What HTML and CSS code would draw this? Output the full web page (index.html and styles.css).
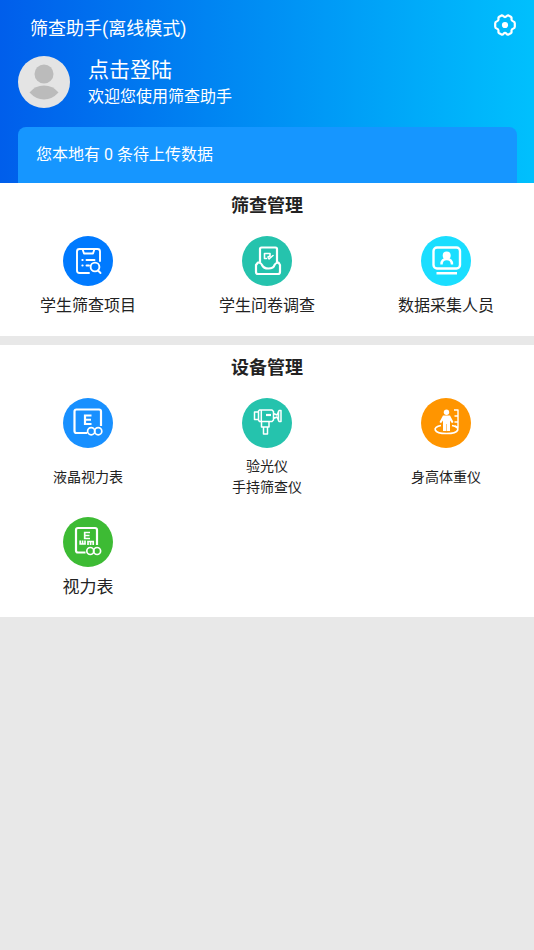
FILE: index.html
```html
<!DOCTYPE html>
<html lang="zh-CN">
<head>
<meta charset="utf-8">
<meta name="viewport" content="width=device-width, initial-scale=1">
<title>筛查助手</title>
<link rel="stylesheet" href="styles.css">
</head>
<body>
<header class="hero">
  <div class="topbar">
    <h1 class="app-title">筛查助手(离线模式)</h1>
    <button class="settings" type="button" aria-label="设置">
      <svg viewBox="0 0 24 24" width="24" height="24" fill="none" stroke="#fff" stroke-width="2.2" stroke-linejoin="round"><path d="M9 2.300Q9.900 2.300 10.500 3.300Q12 4.900 13.500 3.300Q14.100 2.300 15 2.300L17.800 3.700Q18.900 4.400 18.500 5.700Q18.200 7.900 20.400 8.500Q21.800 8.900 21.800 10.300V13.700Q21.800 15.100 20.400 15.500Q18.200 16.100 18.500 18.300Q18.900 19.600 17.800 20.300L15 21.700Q14.100 21.700 13.500 20.700Q12 19.100 10.500 20.700Q9.900 21.700 9 21.700L6.200 20.300Q5.100 19.600 5.500 18.300Q5.800 16.100 3.600 15.500Q2.200 15.100 2.200 13.700V10.300Q2.200 8.900 3.600 8.500Q5.800 7.900 5.500 5.700Q5.100 4.400 6.200 3.700Z"/><circle cx="12" cy="12" r="3.100" fill="#fff" stroke="none"/></svg>
    </button>
  </div>
  <a class="profile" href="#login">
    <svg class="avatar" viewBox="0 0 52 52" width="52" height="52"><circle cx="26" cy="26" r="26" fill="#e4e4e4"/><circle cx="26" cy="18" r="9.500" fill="#bbb"/><path d="M11.500 36.500Q17 29.500 26 29.500T40.500 36.500Q34 43.500 26 43.500T11.500 36.500Z" fill="#bbb"/></svg>
    <span class="profile-text">
      <span class="login">点击登陆</span>
      <span class="welcome">欢迎您使用筛查助手</span>
    </span>
  </a>
  <p class="notice">您本地有 0 条待上传数据</p>
</header>
<main>
  <section class="panel">
    <h2 class="panel-title">筛查管理</h2>
    <div class="grid">
      <a class="item" href="#projects">
        <svg class="icon" viewBox="0 0 50 50" fill="none" stroke="#fff" stroke-width="1.900" stroke-linecap="round" stroke-linejoin="round"><circle cx="25" cy="25" r="25" fill="#007aff" stroke="none"/><path d="M26 37H16.500Q14 37 14 34.500V15.500Q14 13 16.500 13H34.500Q37 13 37 15.500V25M19.500 13L21 17.500H30L31.500 13M23.500 24H31.500M23.500 29.500H26M19.300 24h.4M19.300 29.500h.4"/><circle cx="32" cy="31" r="4.400"/><path d="M35 34.500L37.500 37"/></svg>
        <span class="label">学生筛查项目</span>
      </a>
      <a class="item" href="#survey">
        <svg class="icon" viewBox="0 0 50 50" fill="none" stroke="#fff" stroke-width="2.200" stroke-linejoin="round" stroke-linecap="round"><circle cx="25" cy="25" r="25" fill="#25c3ad" stroke="none"/><path d="M18 27V13Q18 11.500 19.500 11.500H33.500Q35 11.500 35 13V27M18 26.500H16L14 29V36Q14 38 16 38H36Q38 38 38 36V29L36.500 26.500H35M18 27Q19 27 20 29Q21.500 32.500 26.500 32.500T32.500 29Q33.500 27 35 27"/><path d="M24.500 22.500H22.500V17.500H28V20L26 21L27 23L31 19.500" stroke-width="1.600"/></svg>
        <span class="label">学生问卷调查</span>
      </a>
      <a class="item" href="#staff">
        <svg class="icon" viewBox="0 0 50 50" fill="none" stroke="#fff" stroke-width="2.400" stroke-linejoin="round"><circle cx="25" cy="25" r="25" fill="#1adeff" stroke="none"/><rect x="12.500" y="11.500" width="26.500" height="21" rx="3.500"/><circle cx="25.700" cy="19.500" r="4" fill="#fff" stroke="none"/><path d="M20.500 28.500Q20.500 23 25.700 23T31 28.500M15.500 37.300H36"/></svg>
        <span class="label">数据采集人员</span>
      </a>
    </div>
  </section>
  <section class="panel">
    <h2 class="panel-title">设备管理</h2>
    <div class="grid">
      <a class="item" href="#lcd-chart">
        <svg class="icon" viewBox="0 0 50 50" fill="none" stroke="#fff" stroke-width="2.200" stroke-linejoin="round"><circle cx="25" cy="25" r="25" fill="#1890ff" stroke="none"/><path d="M24 35H13.500Q11.500 35 11.500 33V13.500Q11.500 11.500 13.500 11.500H36Q38 11.500 38 13.500V28"/><path d="M28.500 17.500H22V26H28.500M22 21.750H28" stroke-linejoin="miter"/><g stroke-width="1.700"><circle cx="28.200" cy="33.200" r="3.600"/><circle cx="35.200" cy="33.200" r="3.600"/></g></svg>
        <span class="label label-small">液晶视力表</span>
      </a>
      <a class="item" href="#refractometer">
        <svg class="icon" viewBox="0 0 50 50" fill="none" stroke="#fff" stroke-width="1.500" stroke-linejoin="round"><circle cx="25" cy="25" r="25" fill="#25c3ad" stroke="none"/><path d="M16.500 13L17.500 12H30L31.500 13.500V22L30 23.500H17.500L16.500 22ZM16.500 14H12.500V21.500H16.500M19.300 12V23.500M31.500 15.500L35 17L37 12.500H39V23.500H37L35 19L31.500 20.500M36.500 13V23M19.500 23.500V29H27V23.500M21.500 29V36H25.500V29"/><path d="M24 17H29" stroke-width="2.200"/></svg>
        <span class="label label-small">验光仪<br>手持筛查仪</span>
      </a>
      <a class="item" href="#height-weight">
        <svg class="icon" viewBox="0 0 50 50" fill="none" stroke="#fff" stroke-width="1.700" stroke-linejoin="round"><circle cx="25" cy="25" r="25" fill="#ff9500" stroke="none"/><circle cx="25.500" cy="14.200" r="2.700" fill="#fff" stroke="none"/><path d="M22 17.500H29L32.500 24L31 25.300L29 22.500V33H22V22.500L20 25.300L18.500 24Z" fill="#fff" stroke="none"/><path d="M25.500 26V33" stroke="#ff9500" stroke-width=".5"/><path d="M20 27.500C11 29 12 35.500 25.500 35.500C39 35.500 40 29 31 27.500"/><path d="M33 12H37V29.500L34 28M33.500 18H37M33.500 24H37" stroke-width="1.400"/></svg>
        <span class="label label-small">身高体重仪</span>
      </a>
      <a class="item" href="#chart">
        <svg class="icon" viewBox="0 0 50 50" fill="none" stroke="#fff" stroke-width="2.200" stroke-linejoin="round"><circle cx="25" cy="25" r="25" fill="#3dbb34" stroke="none"/><path d="M22.500 35.500H15Q13 35.500 13 33.500V13Q13 11 15 11H32Q34 11 34 13V28"/><g stroke-width="1.700" stroke-linejoin="miter"><path d="M27 15.500H21.700V21.500H27M21.700 18.500H26.500M17.200 23.500V27H22V23.500M19.600 23.500V27M25 28V24.500H30.200V28M27.600 24.500V28"/><circle cx="27.300" cy="34" r="3.500"/><circle cx="34.100" cy="34" r="3.500"/></g></svg>
        <span class="label label-large">视力表</span>
      </a>
    </div>
  </section>
</main>
</body>
</html>
```
FILE: styles.css
```css
* {
  box-sizing: border-box;
}

body {
  margin: 0;
  background: #e8e8e8;
  color: #222;
  font-family: Roboto, "Noto Sans CJK SC", sans-serif;
  font-size: 16px;
}

h1,
h2,
p {
  margin: 0;
}

a {
  color: inherit;
  text-decoration: none;
}

.hero {
  padding: 13px 17px 0 18px;
  background: linear-gradient(90deg, #005eeb, #00c0fd);
  color: #fff;
}

.topbar {
  display: flex;
  align-items: flex-start;
  justify-content: space-between;
  padding-left: 12px;
}

.app-title {
  font-size: 18px;
  font-weight: 400;
  line-height: 32px;
}

.settings {
  width: 24px;
  height: 24px;
  padding: 0;
  border: 0;
  background: none;
}

.settings svg,
.avatar {
  display: block;
}

.profile {
  display: flex;
  align-items: center;
  gap: 18px;
  padding-top: 10px;
}

.profile-text {
  display: flex;
  flex-direction: column;
}

.login {
  font-size: 21px;
  line-height: 30px;
}

.welcome {
  line-height: 24px;
}

.notice {
  margin-top: 18px;
  padding: 16px 18px;
  border-radius: 8px 8px 0 0;
  background: #1696ff;
  line-height: 24px;
}

.panel {
  padding-bottom: 7px;
  background: #fff;
}

.panel + .panel {
  margin-top: 9px;
}

.panel-title {
  padding: 8px 0;
  font-size: 18px;
  font-weight: 700;
  line-height: 29px;
  text-align: center;
}

.grid {
  display: grid;
  grid-template-columns: repeat(3, 1fr);
  column-gap: 3px;
}

.item {
  display: flex;
  flex-direction: column;
  align-items: center;
  padding: 8px 0;
}

.icon {
  width: 50px;
  height: 50px;
  flex: none;
}

.label {
  margin: auto 0;
  padding: 8px 0 3px;
  line-height: 24px;
  text-align: center;
}

.label-small {
  font-size: 14px;
  line-height: 21px;
}

.label-large {
  font-size: 17px;
}
```
